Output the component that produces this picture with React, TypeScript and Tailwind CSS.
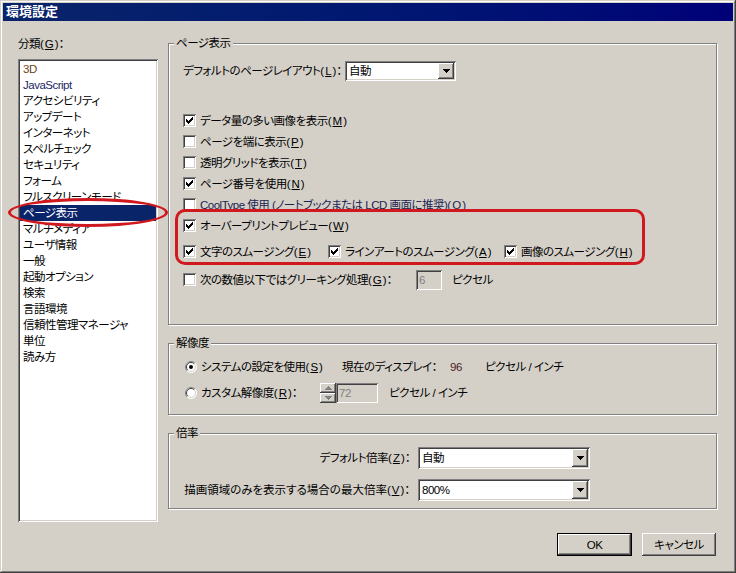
import React from "react";

const raised =
  "shadow-[inset_-1px_-1px_#404040,inset_1px_1px_#ffffff,inset_-2px_-2px_#808080,inset_2px_2px_#d4d0c8]";
const sunken =
  "shadow-[inset_1px_1px_#808080,inset_-1px_-1px_#ffffff,inset_2px_2px_#404040,inset_-2px_-2px_#d4d0c8]";
const etched = "border border-[#808080] shadow-[1px_1px_#ffffff,inset_1px_1px_#ffffff]";

// mnemonic, e.g. (G)
function K({ c }: { c: string }) {
  return (
    <span className="tracking-normal">
      (<u className="px-[1px] underline underline-offset-1">{c}</u>)
    </span>
  );
}

function Check({ on }: { on?: boolean }) {
  const starts = [2, 3, 4, 3, 2, 1, 0];
  return (
    <span className={`inline-flex h-[13px] w-[13px] shrink-0 bg-white ${sunken}`}>
      {on ? (
        <svg width="13" height="13" viewBox="0 0 13 13" shapeRendering="crispEdges">
          {starts.map((s, i) => (
            <rect key={i} x={3 + i} y={3 + s} width="1" height="3" fill="#000" />
          ))}
        </svg>
      ) : null}
    </span>
  );
}

function Radio({ on }: { on?: boolean }) {
  return (
    <svg width="12" height="12" viewBox="0 0 12 12" className="shrink-0">
      <circle cx="6" cy="6" r="5.5" fill="#fff" />
      <path d="M2.1 9.9 A5.5 5.5 0 0 1 9.9 2.1" stroke="#808080" fill="none" />
      <path d="M9.9 2.1 A5.5 5.5 0 0 1 2.1 9.9" stroke="#ffffff" fill="none" />
      <path d="M2.8 9.2 A4.5 4.5 0 0 1 9.2 2.8" stroke="#404040" fill="none" />
      <path d="M9.2 2.8 A4.5 4.5 0 0 1 2.8 9.2" stroke="#d4d0c8" fill="none" />
      {on ? <circle cx="6" cy="6" r="2" fill="#000" /> : null}
    </svg>
  );
}

function Arrow({ color = "#000" }: { color?: string }) {
  return (
    <svg width="7" height="4" viewBox="0 0 7 4" shapeRendering="crispEdges">
      <rect x="0" y="0" width="7" height="1" fill={color} />
      <rect x="1" y="1" width="5" height="1" fill={color} />
      <rect x="2" y="2" width="3" height="1" fill={color} />
      <rect x="3" y="3" width="1" height="1" fill={color} />
    </svg>
  );
}

function Select({ value, className }: { value: string; className: string }) {
  return (
    <div className={`flex bg-white p-[2px] ${sunken} ${className}`}>
      <span className="flex flex-1 items-center pl-[2px]">{value}</span>
      <span className={`flex w-[16px] items-center justify-center bg-[#d4d0c8] ${raised}`}>
        <Arrow />
      </span>
    </div>
  );
}

function CheckRow({ on, children }: { on?: boolean; children: React.ReactNode }) {
  return (
    <div className="flex h-[21px] items-center gap-[4px]">
      <Check on={on} />
      <span>{children}</span>
    </div>
  );
}

function Group({ title, className, children }: { title: string; className: string; children: React.ReactNode }) {
  return (
    <fieldset className={`w-[549px] ${etched} ${className}`}>
      <legend className="ml-[5px] bg-[#d4d0c8] px-[2px] leading-[14px]">{title}</legend>
      <div className="pl-[14px]">{children}</div>
    </fieldset>
  );
}

const categories = [
  "3D",
  "JavaScript",
  "アクセシビリティ",
  "アップデート",
  "インターネット",
  "スペルチェック",
  "セキュリティ",
  "フォーム",
  "フルスクリーンモード",
  "ページ表示",
  "マルチメディア",
  "ユーザ情報",
  "一般",
  "起動オプション",
  "検索",
  "言語環境",
  "信頼性管理マネージャ",
  "単位",
  "読み方",
];

export default function App() {
  return (
    <div className="relative h-[573px] w-[736px] overflow-hidden whitespace-nowrap bg-[#d4d0c8] font-['Liberation_Sans','Noto_Sans_CJK_JP',sans-serif] text-[11.5px] leading-[16px] tracking-[-0.5px] text-black [font-feature-settings:'palt'] shadow-[inset_-1px_-1px_#404040,inset_1px_1px_#d4d0c8,inset_-2px_-2px_#808080,inset_2px_2px_#ffffff]">
      {/* title bar */}
      <div className="mx-[3px] mt-[3px] flex h-[18px] items-center bg-gradient-to-r from-[#0a246a] to-[#000078] pl-[3px] text-[13px] font-bold tracking-normal text-white">
        環境設定
      </div>

      <div className="flex gap-[10px] pl-[18px] pt-[15px]">
        {/* categories */}
        <div className="w-[140px]">
          <div className="h-[16px]">
            分類<K c="G" />：
          </div>
          <div className={`mt-[7px] h-[463px] bg-white p-[2px] ${sunken}`}>
            {categories.map((c) => {
              const sel = c === "ページ表示";
              const tone =
                c === "3D" ? "text-[#6e4416]" : c === "JavaScript" ? "text-[#1c2866]" : "text-black";
              return (
                <div
                  key={c}
                  className={`h-[16px] pl-[3px] leading-[16px] ${sel ? "bg-[#0a246a] text-white" : tone}`}
                >
                  {c}
                </div>
              );
            })}
          </div>
        </div>

        {/* settings */}
        <div className="w-[549px]">
          <Group title="ページ表示" className="h-[289px]">
            <div className="mt-[11px] flex h-[20px] items-center">
              <span className="w-[162px]">
                デフォルトのページレイアウト<K c="L" />：
              </span>
              <Select value="自動" className="h-[20px] w-[111px]" />
            </div>

            <div className="mt-[29px]">
              <CheckRow on>
                データ量の多い画像を表示<K c="M" />
              </CheckRow>
              <CheckRow>
                ページを端に表示<K c="P" />
              </CheckRow>
              <CheckRow>
                透明グリッドを表示<K c="T" />
              </CheckRow>
              <CheckRow on>
                ページ番号を使用<K c="N" />
              </CheckRow>
              <CheckRow>
                <span className="text-[#1a2452]">
                  CoolType 使用 (ノートブックまたは LCD 画面に推奨)<K c="O" />
                </span>
              </CheckRow>
              <CheckRow on>
                オーバープリントプレビュー<K c="W" />
              </CheckRow>
            </div>

            <div className="mt-[5px] flex h-[21px] items-center">
              <div className="flex w-[145px] items-center gap-[4px]">
                <Check on />
                <span>
                  文字のスムージング<K c="E" />
                </span>
              </div>
              <div className="flex w-[176px] items-center gap-[4px]">
                <Check on />
                <span>
                  ラインアートのスムージング<K c="A" />
                </span>
              </div>
              <div className="flex items-center gap-[4px]">
                <Check on />
                <span>
                  画像のスムージング<K c="H" />
                </span>
              </div>
            </div>

            <div className="mt-[7px] flex h-[21px] items-center">
              <div className="flex w-[233px] items-center gap-[4px]">
                <Check />
                <span>
                  次の数値以下ではグリーキング処理<K c="G" />：
                </span>
              </div>
              <div className={`flex h-[20px] w-[26px] items-center pl-[3px] text-[#808080] ${sunken}`}>6</div>
              <span className="ml-[10px]">ピクセル</span>
            </div>
          </Group>

          <Group title="解像度" className="mt-[11px] h-[79px]">
            <div className="mt-[7px] flex h-[20px] items-center">
              <div className="flex w-[159px] items-center gap-[4px] pl-[2px]">
                <Radio on />
                <span>
                  システムの設定を使用<K c="S" />
                </span>
              </div>
              <span className="w-[108px]">現在のディスプレイ：</span>
              <span className="w-[35px] text-[#4a1c1c]">96</span>
              <span>ピクセル / インチ</span>
            </div>
            <div className="mt-[6px] flex h-[20px] items-center">
              <div className="flex w-[137px] items-center gap-[4px] pl-[2px]">
                <Radio />
                <span>
                  カスタム解像度<K c="R" />：
                </span>
              </div>
              <div className="flex h-[20px] w-[16px] flex-col">
                <span className={`flex h-[10px] items-center justify-center ${raised}`}>
                  <span className="rotate-180">
                    <Arrow color="#808080" />
                  </span>
                </span>
                <span className={`flex h-[10px] items-center justify-center ${raised}`}>
                  <Arrow color="#808080" />
                </span>
              </div>
              <div className={`flex h-[20px] w-[42px] items-center pl-[3px] text-[#808080] ${sunken}`}>72</div>
              <span className="ml-[11px]">ピクセル / インチ</span>
            </div>
          </Group>

          <Group title="倍率" className="mt-[11px] h-[83px]">
            <div className="mt-[7px] flex h-[22px] items-center">
              <span className="w-[235px] pr-[8px] text-right">
                デフォルト倍率<K c="Z" />：
              </span>
              <Select value="自動" className="h-[22px] w-[172px]" />
            </div>
            <div className="mt-[10px] flex h-[22px] items-center">
              <span className="w-[235px] pr-[8px] text-right tracking-[0px]">
                描画領域のみを表示する場合の最大倍率<K c="V" />：
              </span>
              <Select value="800%" className="h-[22px] w-[172px]" />
            </div>
          </Group>
        </div>
      </div>

      {/* buttons */}
      <div className="mt-[11px] flex justify-end gap-[10px] pr-[20px]">
        <button className={`h-[23px] w-[75px] border border-black bg-[#d4d0c8] ${raised}`}>OK</button>
        <button className={`h-[23px] w-[74px] bg-[#d4d0c8] ${raised}`}>キャンセル</button>
      </div>

      {/* red annotation marks */}
      <div className="pointer-events-none absolute left-[8px] top-[198px] h-[29px] w-[160px] rounded-[50%] border-[3px] border-[#d0191f]" />
      <div className="pointer-events-none absolute left-[175px] top-[209px] h-[56px] w-[470px] rounded-[10px] border-[3px] border-[#d0191f]" />
    </div>
  );
}
